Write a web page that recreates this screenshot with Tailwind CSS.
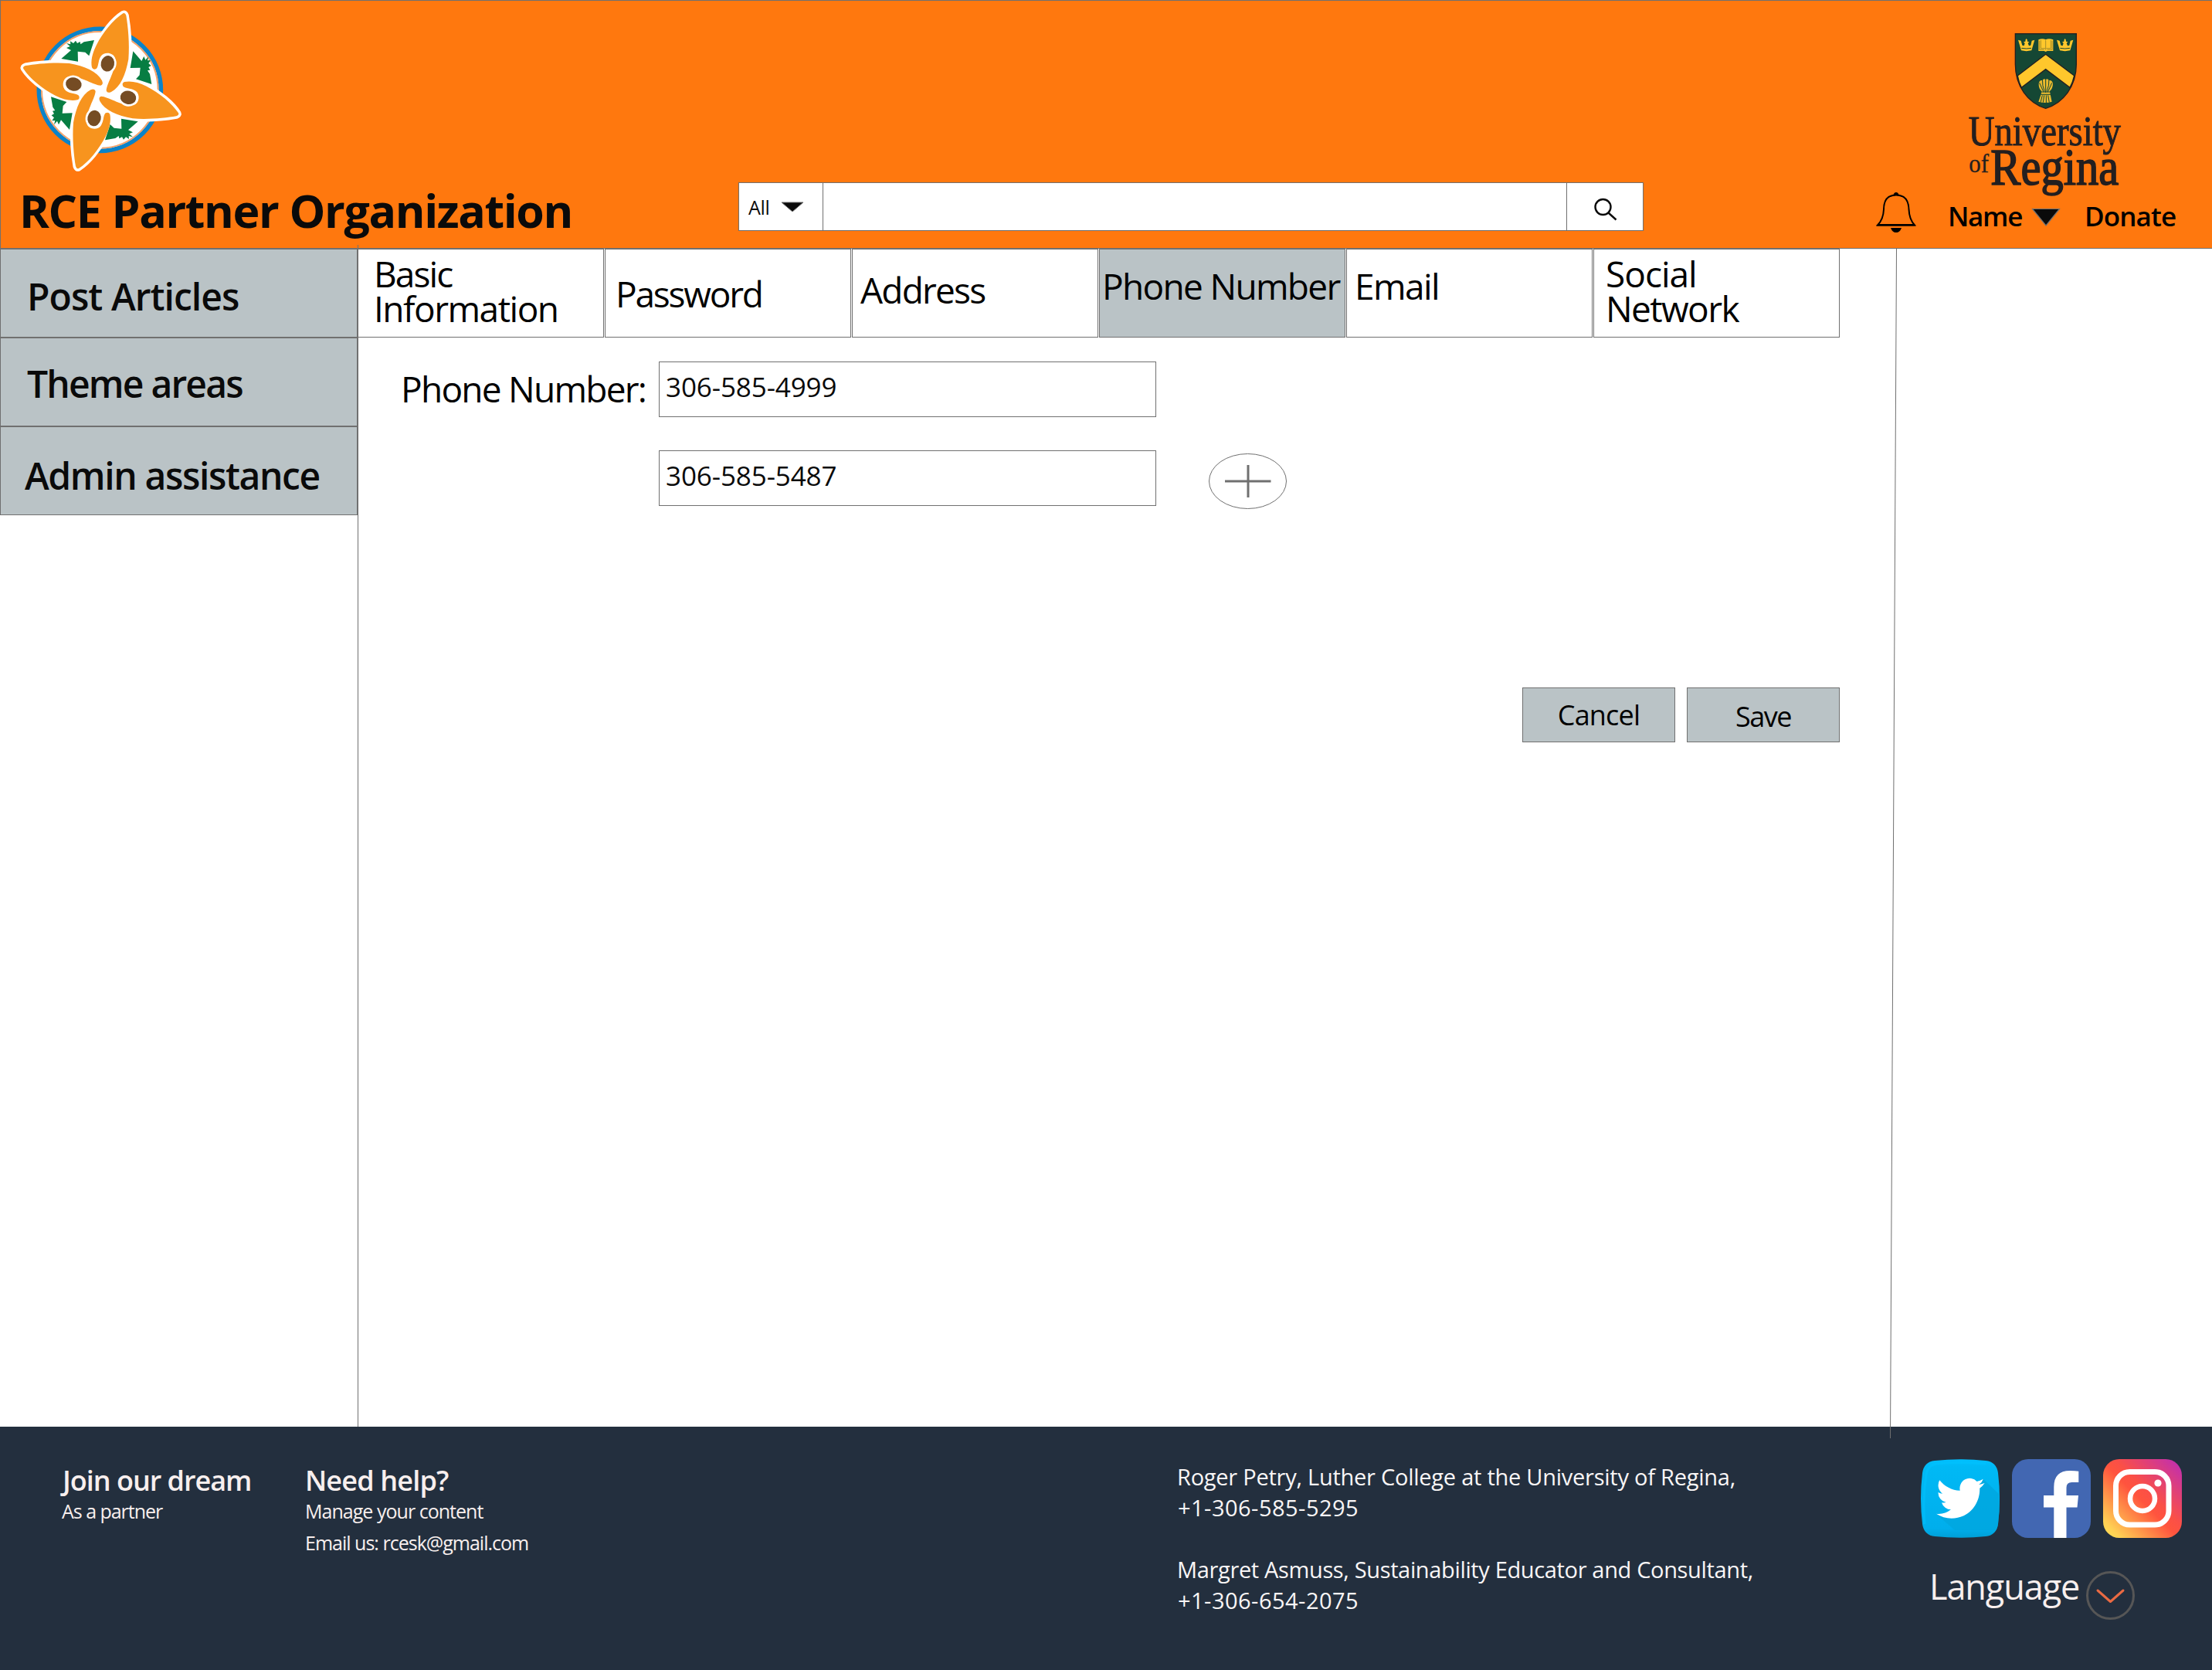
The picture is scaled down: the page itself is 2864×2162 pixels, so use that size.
<!DOCTYPE html>
<html lang="en">
<head>
<meta charset="utf-8">
<title>RCE Partner Organization</title>
<script src="https://cdn.jsdelivr.net/npm/@tailwindcss/browser@4"></script>
</head>
<body class="relative w-[2864px] h-[2162px] overflow-hidden bg-white font-['Open_Sans','Noto_Sans',sans-serif] text-black whitespace-nowrap">

<header class="flex h-[322px] border border-r-0 border-[#707070] bg-[#ff780e]">
  <div class="w-[955px] shrink-0">
    <svg class="block w-[259px] h-[240px]" viewBox="3 3 777 720">
      <defs>
        <path id="petal" d="M478 52 C440 76 400 126 374 176 C358 208 352 236 357 262 Q362 273 374 267 C384 257 380 236 392 218 C404 200 440 202 447 226 C452 272 414 325 413 352 Q416 364 432 357 C468 338 488 290 499 230 C504 170 497 100 490 60 Q486 48 478 52Z"/>
        <path id="leaf" d="M238 228 L276 195 L258 186 L272 180 L258 168 L274 172 L273 160 L285 168 L294 158 L300 168 L311 162 L313 172 L326 163 L366 156 L346 217 L331 203 L302 200 L303 239Z"/>
        <g id="head"><ellipse cx="418" cy="247" rx="34" ry="38" fill="#fff" transform="rotate(12 418 247)"/><ellipse cx="418" cy="247" rx="26" ry="31" fill="#754c24" transform="rotate(12 418 247)"/></g>
      </defs>
      <circle cx="388" cy="349" r="237" fill="#fff" stroke="#0b83c9" stroke-width="17"/>
      <circle cx="388" cy="349" r="226" fill="none" stroke="#f4a26a" stroke-width="6"/>
      <g fill="#fff" stroke="#fff" stroke-width="21" stroke-linejoin="round">
        <use href="#petal"/><use href="#petal" transform="rotate(90 392 353)"/><use href="#petal" transform="rotate(180 392 353)"/><use href="#petal" transform="rotate(270 392 353)"/>
      </g>
      <g fill="#077d43">
        <use href="#leaf"/><use href="#leaf" transform="rotate(90 392 353)"/><use href="#leaf" transform="rotate(180 387 350)"/><use href="#leaf" transform="rotate(270 392 350)"/>
      </g>
      <g fill="#f7941e">
        <use href="#petal"/><use href="#petal" transform="rotate(90 392 353)"/><use href="#petal" transform="rotate(180 392 353)"/><use href="#petal" transform="rotate(270 392 353)"/>
      </g>
      <use href="#head"/><use href="#head" transform="rotate(90 392 353)"/><use href="#head" transform="rotate(180 392 353)"/><use href="#head" transform="rotate(270 392 353)"/>
    </svg>
    <h1 class="mt-px pl-[24px] text-[59px] leading-[60px] font-bold tracking-[-1.36px] text-[#0a0a0a]">RCE Partner Organization</h1>
  </div>

  <div class="mt-[235px] flex h-[63px] w-[1172px] shrink-0 border border-[#707070] bg-white">
    <div class="flex w-[109px] items-center border-r border-[#707070] pl-[12px] text-[#0a0a0a]">
      <span class="text-[25px] leading-[30px] tracking-[-0.26px]">All</span>
      <svg class="ml-[14px] h-[14px] w-[30px]" viewBox="0 0 30 14"><path d="M1 1H29L15 13Z" fill="#0a0a0a" stroke="#707070"/></svg>
    </div>
    <div class="w-[963px] border-r border-[#707070]"></div>
    <svg class="mt-[19px] ml-[34px] h-[30px] w-[32px]" viewBox="0 0 32 30" fill="none" stroke="#0a0a0a" stroke-width="2.4"><circle cx="12.5" cy="12" r="10"/><path d="M19.5 19.5L29.5 28.5"/></svg>
  </div>

  <div class="flex-1">
    <svg class="mt-[38px] ml-[418px] block h-[210px] w-[204px] overflow-visible" viewBox="438 57 612 630">
      <path d="M628 71H865V190C865 275 815 340 746 361C677 340 628 275 628 190Z" fill="#154734" stroke="#231f20" stroke-width="4"/>
      <path d="M746 151L857 234C853 252 848 266 840 280L746 209L652 280C645 266 640 252 637 234Z" fill="#ffc72c" stroke="#231f20" stroke-width="4"/>
      <g id="crown" fill="#ffc72c">
        <path d="M639 95L650 98L655 116L662 118L665 108L660 103L667 101L668 94L671 90L674 94L675 101L682 103L677 108L681 118L688 116L692 98L703 95L691 136Q671 141 651 136Z"/>
        <path d="M652 127Q671 131 690 127" fill="none" stroke="#154734" stroke-width="3"/>
      </g>
      <use href="#crown" x="150"/>
      <path d="M718 94Q734 88 746 94Q758 88 775 94V138H752L746 141L740 138H718Z" fill="#ffc72c"/>
      <path d="M746 96V134M722 98V133H740M771 98V133H752M727 96V128H744M766 96V128H748" fill="none" stroke="#7d7426" stroke-width="2"/>
      <path d="M719 264Q722 250 732 252Q740 244 746 249Q752 244 760 252Q770 250 774 264Q774 284 762 294L764 306L770 335Q746 343 718 335L728 306L730 294Q718 284 719 264Z" fill="#e9b92e"/>
      <path d="M746 240V300M733 244Q732 275 742 296M759 244Q760 275 750 296M722 262L738 298M770 262L754 298M727 297H765M727 307H765M733 310L726 338M740 310L736 338M748 310V340M755 310L760 338" fill="none" stroke="#154734" stroke-width="3"/>
      <g fill="#231f20" font-family="'Liberation Serif', serif">
        <text x="446" y="503" font-size="164" textLength="592" lengthAdjust="spacingAndGlyphs" stroke="#231f20" stroke-width="3">University</text>
        <text x="448" y="610" font-size="100" textLength="77" lengthAdjust="spacingAndGlyphs" stroke="#231f20" stroke-width="1">of</text>
        <text x="532" y="658" font-size="202" textLength="498" lengthAdjust="spacingAndGlyphs" stroke="#231f20" stroke-width="5">Regina</text>
      </g>
    </svg>
    <div class="flex text-[35px] leading-[52px] font-semibold">
      <svg class="ml-[301px] h-[52px] w-[52px]" viewBox="0 0 52 52"><path d="M2 42.5Q9.500 35 10 22Q10 3.500 26 3.500Q42 3.500 42.500 22Q43 35 50 42.500Z" fill="none" stroke="#000" stroke-width="2"/><path d="M1 43L4 41H48L51 43.600H1ZM19 46H33Q31 52 26 52Q21 52 19 46ZM22.500 4Q23 0 26 0Q29 0 29.500 4Z"/></svg>
      <span class="mt-[5px] ml-[41px] w-[108px] tracking-[-1.3px]">Name</span>
      <svg class="mt-[20px] h-[24px] w-[38px]" viewBox="0 0 38 24"><path d="M1.500 1.500H36.500L19 23Z" fill="#0a0a0a" stroke="#707070" stroke-width="1.200"/></svg>
      <span class="mt-[5px] ml-[31px] tracking-[-0.9px]">Donate</span>
    </div>
  </div>
</header>

<div class="flex h-[1525px]">
  <nav class="w-[463px] shrink-0 text-[48px] leading-[60px] font-semibold text-[#0a0a0a]">
    <a class="block h-[115px] border border-[#707070] bg-[#bac3c6] pt-[31px] pl-[34px] tracking-[-0.95px]">Post Articles</a>
    <a class="block h-[115px] border border-[#707070] bg-[#bac3c6] pt-[29px] pl-[34px] tracking-[-1.8px]">Theme areas</a>
    <a class="block h-[115px] border border-[#707070] bg-[#bac3c6] pt-[33px] pl-[31px] tracking-[-1.38px]">Admin assistance</a>
  </nav>
  <main class="flex-1 border-l border-[#707070]">
    <div class="-ml-px flex gap-px text-[46px] leading-[45px]">
      <a class="h-[115px] w-[319px] border border-[#707070] pt-[9px] pl-[20px] tracking-[-1.5px]"><span class="tracking-[-1.9px]">Basic</span><br>Information</a>
      <a class="h-[115px] w-[319px] border border-[#707070] pt-[35px] pl-[13px] tracking-[-2.2px]">Password</a>
      <a class="h-[115px] w-[319px] border border-[#707070] pt-[30px] pl-[10px] tracking-[-1.8px]">Address</a>
      <a class="h-[115px] w-[319px] border border-[#707070] bg-[#bac3c6] pt-[25px] pl-[3px] tracking-[-1.68px]">Phone Number</a>
      <a class="h-[115px] w-[319px] border border-[#707070] pt-[25px] pl-[10px] tracking-[-1.58px]">Email</a>
      <a class="h-[115px] w-[319px] border border-[#707070] pt-[9px] pl-[15px] tracking-[-1.6px]"><span class="tracking-[-1px]">Social</span><br>Network</a>
    </div>
    <div class="mt-[31px] flex pl-[55px]">
      <label class="mt-[5px] w-[334px] text-[46px] leading-[60px] tracking-[-1.74px]">Phone Number:</label>
      <div class="flex flex-col gap-[43px] text-[35px] text-[#0a0a0a]">
        <input class="h-[72px] w-[644px] border border-[#707070] pb-[8px] pl-[8px] tracking-[-0.1px]" value="306-585-4999">
        <input class="h-[72px] w-[644px] border border-[#707070] pb-[8px] pl-[8px] tracking-[-0.1px]" value="306-585-5487">
      </div>
      <svg class="mt-[119px] ml-[68px] h-[72px] w-[101px]" viewBox="0 0 101 72" fill="none" stroke="#707070"><ellipse cx="50.500" cy="36" rx="50" ry="35.500"/><path d="M21 36H80.500M51 15V57" stroke-width="3"/></svg>
    </div>
    <div class="mt-[231px] flex w-[1918px] justify-end gap-[15px] text-[36px] leading-[40px]">
      <button class="h-[71px] w-[198px] border border-[#707070] bg-[#bac3c6] pt-px tracking-[-0.84px]">Cancel</button>
      <button class="h-[71px] w-[198px] border border-[#707070] bg-[#bac3c6] pt-[4px] tracking-[-1.5px]">Save</button>
    </div>
  </main>
</div>

<footer class="flex h-[315px] bg-[#232f3e] text-[#f8efee]">
  <div class="w-[395px] shrink-0 pt-[50px] pl-[80px]">
    <h2 class="pl-px text-[36px] leading-[40px] font-semibold tracking-[-1.02px]">Join our dream</h2>
    <p class="mt-[4px] text-[25px] leading-[30px] tracking-[-1.03px]">As a partner</p>
  </div>
  <div class="w-[1129px] shrink-0 pt-[50px]">
    <h2 class="text-[36px] leading-[40px] font-semibold tracking-[-0.83px]">Need help?</h2>
    <p class="mt-[4px] text-[25px] leading-[30px] tracking-[-0.97px]">Manage your content</p>
    <p class="mt-[11px] text-[25px] leading-[30px] tracking-[-0.99px]">Email us: rcesk@gmail.com</p>
  </div>
  <div class="w-[963px] shrink-0 pt-[45px] text-[29px] leading-[40px] text-[#f9f6f6]">
    <p class="tracking-[-0.25px]">Roger Petry, Luther College at the University of Regina,</p>
    <p class="pl-px tracking-[0.48px]">+1-306-585-5295</p>
    <p class="mt-[40px] tracking-[-0.35px]">Margret Asmuss, Sustainability Educator and Consultant,</p>
    <p class="pl-px tracking-[0.48px]">+1-306-654-2075</p>
  </div>
  <div class="pt-[42px]">
    <div class="flex gap-[16px]">
      <svg class="size-[102px]" viewBox="0 0 102 102">
        <defs>
          <linearGradient id="tw" x1="0" y1="0" x2="0" y2="1"><stop offset="0" stop-color="#00c0ff"/><stop offset=".1" stop-color="#00b9f5"/><stop offset=".88" stop-color="#00aeec"/><stop offset="1" stop-color="#009fd6"/></linearGradient>
          <clipPath id="twc"><path d="M18 2Q51-1.500 84 2Q98 3.500 100 18Q104 51 100 84Q98 98.500 84 100Q51 103.500 18 100Q4 98.500 2 84Q-2 51 2 18Q4 3.500 18 2Z"/></clipPath>
        </defs>
        <g clip-path="url(#twc)">
          <path d="M0 0H102V102H0Z" fill="url(#tw)"/>
          <path d="M5 84Q2 51 7 20Q9 8 20 6Q51 3 84 6" fill="none" stroke="#00c4ff" stroke-opacity=".5" stroke-width="3"/>
          <path d="M81 26L102 46V92H44L22 73L45 66Z" fill="#00a5dd" fill-opacity=".75"/>
        </g>
        <path transform="translate(20 18.800) scale(2.610 2.660)" fill="#fff" d="M23.953 4.570a10 10 0 01-2.825.775 4.958 4.958 0 002.163-2.723c-.951.555-2.005.959-3.127 1.184a4.920 4.920 0 00-8.384 4.482C7.690 8.095 4.067 6.130 1.640 3.162a4.822 4.822 0 00-.666 2.475c0 1.710.870 3.213 2.188 4.096a4.904 4.904 0 01-2.228-.616v.060a4.923 4.923 0 003.946 4.827 4.996 4.996 0 01-2.212.085 4.936 4.936 0 004.604 3.417 9.867 9.867 0 01-6.102 2.105c-.390 0-.779-.023-1.170-.067a13.995 13.995 0 007.557 2.209c9.053 0 13.998-7.496 13.998-13.985 0-.210 0-.420-.015-.630A9.935 9.935 0 0024 4.590z"/>
      </svg>
      <svg class="size-[102px]" viewBox="0 0 102 102">
        <rect width="102" height="102" rx="21" fill="#4267b2"/>
        <path d="M54.300 102V62.500H41V47H54.300V36Q54.300 15 75 15Q82 15 86.300 15.800V30H77.500Q70.500 30 70.500 37V47H86L84.500 62.500H70.500V102Z" fill="#fff"/>
      </svg>
      <svg class="size-[102px]" viewBox="0 0 102 102">
        <defs><linearGradient id="ig" x1=".05" y1=".97" x2=".97" y2=".05"><stop offset="0" stop-color="#ffdd55"/><stop offset=".08" stop-color="#ffd054"/><stop offset=".48" stop-color="#ff543e"/><stop offset=".58" stop-color="#fb5046"/><stop offset="1" stop-color="#c22fae"/></linearGradient></defs>
        <rect width="102" height="102" rx="21" fill="url(#ig)"/>
        <rect x="16.500" y="16.500" width="68.500" height="68.500" rx="18" fill="none" stroke="#fff" stroke-width="7"/>
        <circle cx="51" cy="51" r="16" fill="none" stroke="#fff" stroke-width="6.500"/>
        <circle cx="71" cy="31" r="4.600" fill="#fff"/>
      </svg>
    </div>
    <div class="mt-[31px] flex pl-[11px]">
      <span class="mt-[2px] w-[203px] text-[45px] leading-[60px] tracking-[-1.08px]">Language</span>
      <svg class="mt-[12px] size-[63px]" viewBox="0 0 63 63" fill="none"><circle cx="31.500" cy="31.500" r="30" stroke="#565656" stroke-width="3"/><path d="M15 25L31.500 39.500L48 25" stroke="#ea6a43" stroke-width="3" stroke-linecap="round" stroke-linejoin="round"/></svg>
    </div>
  </div>
</footer>

<!-- Guide lines that run past the header and into the footer -->
<div class="absolute top-[317px] left-[463px] h-[5px] w-px bg-[#707070]"></div>
<svg class="absolute top-[322px] left-[2440px] h-[1540px] w-[20px]" viewBox="0 0 20 1540"><path d="M15.500 0L7.500 1540" stroke="#707070"/></svg>
</body>
</html>
